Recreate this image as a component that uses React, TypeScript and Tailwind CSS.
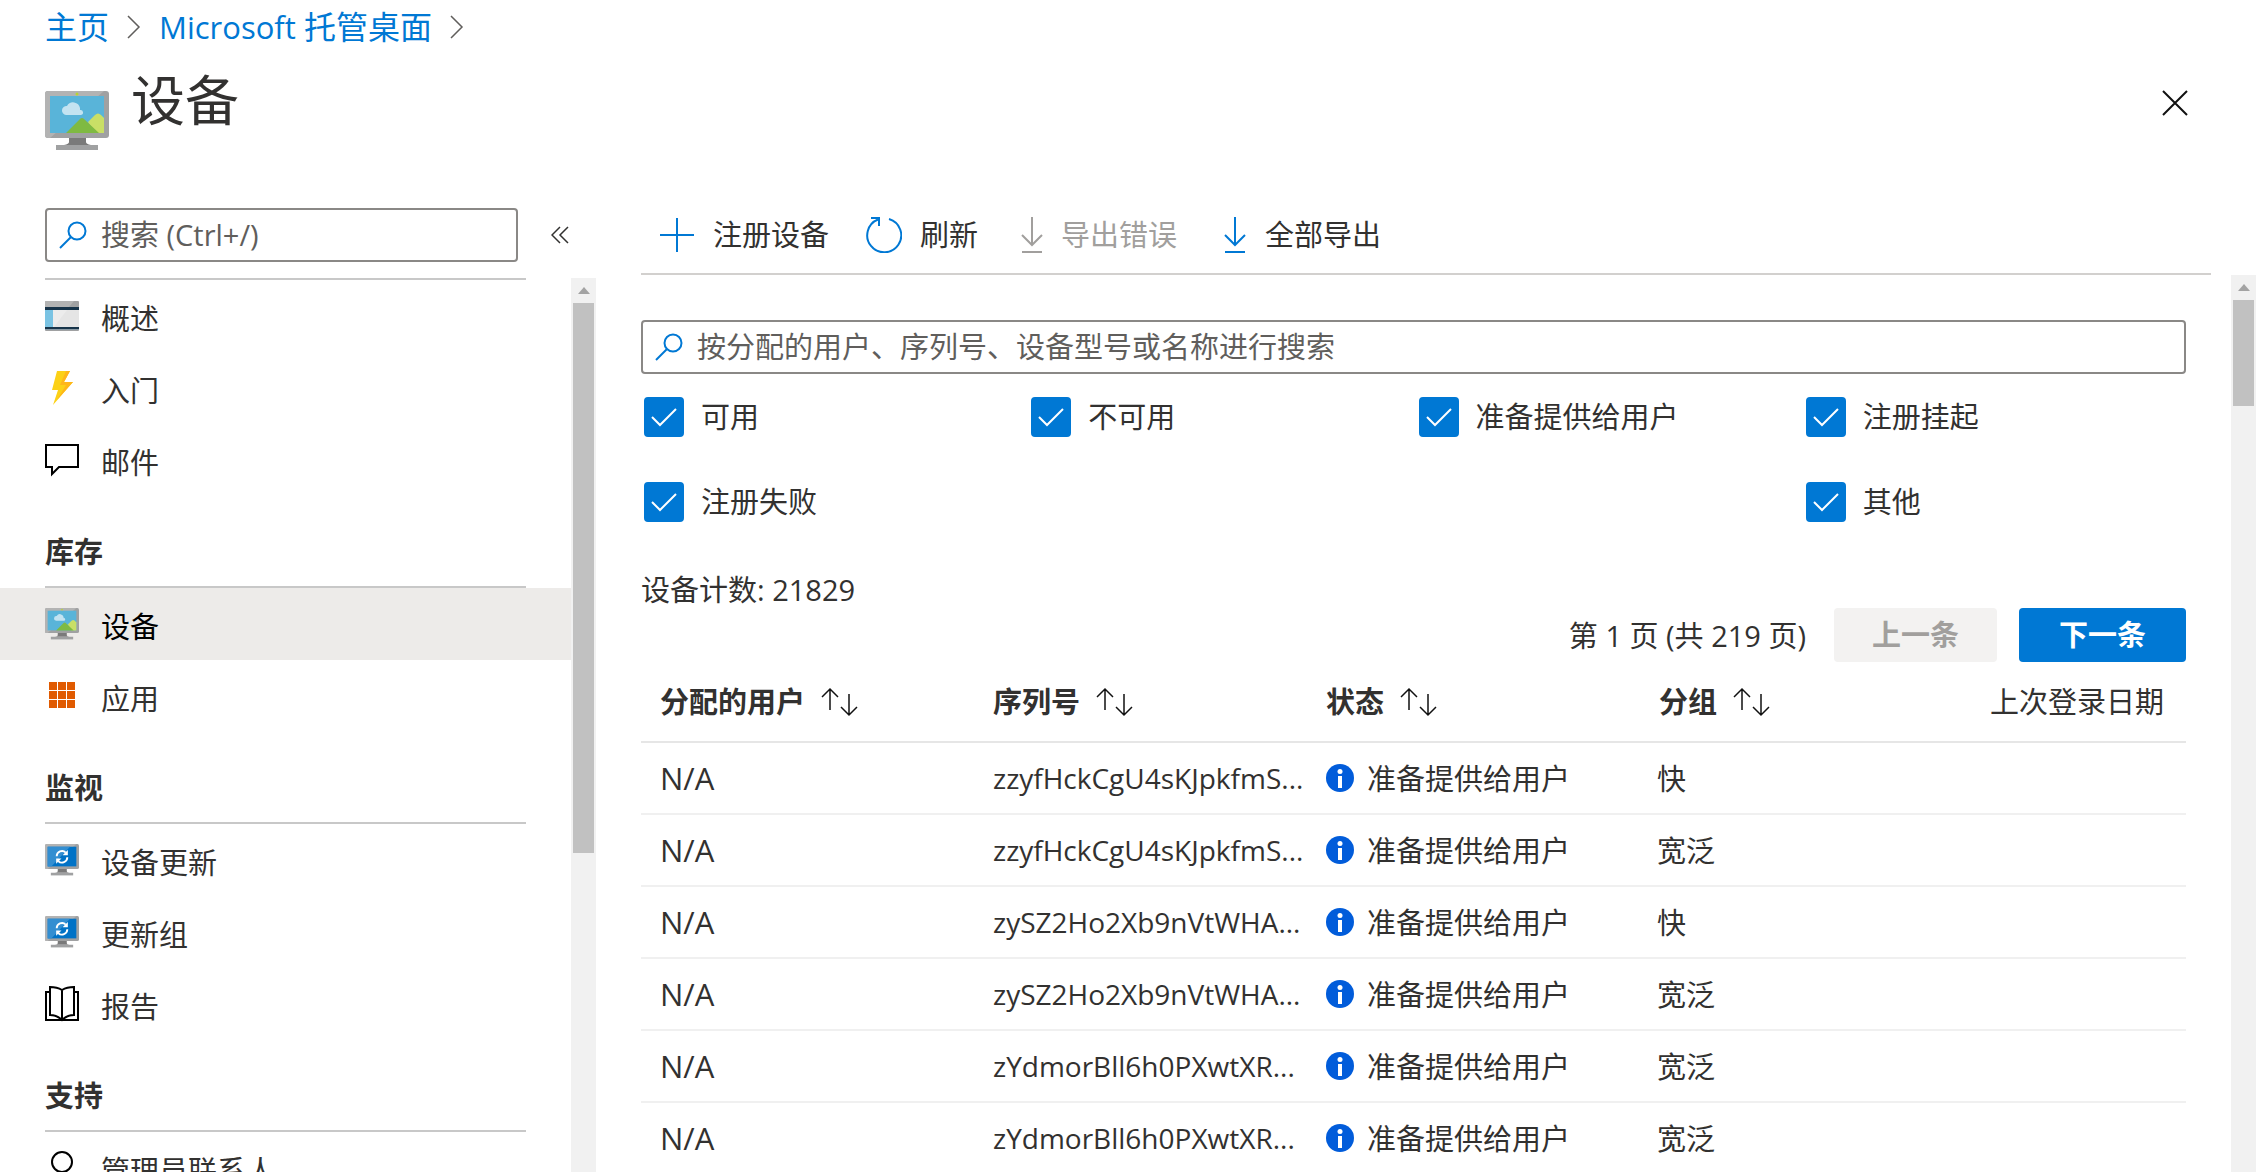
import React, { useState } from 'react';

const MonitorFrame: React.FC<{ children: React.ReactNode; className?: string }> = ({ children, className }) => (
  <svg viewBox="0 0 64 60" className={className} aria-hidden="true">
    <rect x="0" y="0" width="64" height="47" rx="3" fill="#a0a1a2" />
    <path d="M3 0h56L5 47H3q-3 0-3-3V3q0-3 3-3z" fill="#b3b3b3" />
    {children}
    <path d="M24 47h17v4q0 2 5 3H19q5-1 5-3z" fill="#7a7a7a" />
    <rect x="11" y="54" width="42" height="5" fill="#a0a1a2" />
  </svg>
);

const DeviceIcon: React.FC<{ className?: string }> = ({ className }) => (
  <MonitorFrame className={className}>
    <rect x="5" y="5" width="54" height="37" fill="#59b4d9" />
    <circle cx="32" cy="3" r="1.500" fill="#b8d432" />
    <path d="M21 24a4.500 4.500 0 0 1 1-9 7 7 0 0 1 13 2q0 2 0 2a2.500 2.500 0 0 1 1 5z" fill="#c3e3f1" />
    <path d="M43 31l7-7q3-3 6 0l3 3v15H50z" fill="#c9df66" />
    <path d="M21 42l14-14q2-2 4 0l15 14z" fill="#7fba42" />
  </MonitorFrame>
);

const DeviceUpdateIcon: React.FC<{ className?: string }> = ({ className }) => (
  <MonitorFrame className={className}>
    <rect x="5" y="5" width="54" height="37" fill="#0072c6" />
    <path d="M5 5h42L12 42H5z" fill="#338ed1" />
    <g fill="none" stroke="#fff" strokeWidth="3.500">
      <path d="M22 23a10 10 0 0 1 17-7" />
      <path d="M42 25a10 10 0 0 1-17 7" />
    </g>
    <path d="M43 11v10H33zM21 37V27h10z" fill="#fff" />
  </MonitorFrame>
);

const OverviewIcon: React.FC<{ className?: string }> = ({ className }) => (
  <svg viewBox="0 0 34 34" className={className} aria-hidden="true">
    <rect x="0" y="2" width="34" height="30" rx="1" fill="#a0a1a2" />
    <path d="M1 2h28l-5 6H0V3z" fill="#b3b3b3" />
    <rect x="0" y="8" width="34" height="23" fill="#17344a" />
    <rect x="0" y="11" width="34" height="17" fill="#e5e5e5" />
    <path d="M22 11L9 28H8V11z" fill="#ececec" />
    <rect x="0" y="11" width="8" height="17" fill="#7ac3e3" />
    <rect x="0" y="30" width="34" height="1" fill="#8a9aa5" />
  </svg>
);

const BoltIcon: React.FC<{ className?: string }> = ({ className }) => (
  <svg viewBox="0 0 34 34" className={className} aria-hidden="true">
    <path d="M12 0h13l-6 11h9L8 34l5-15H7z" fill="#fcd116" />
    <path d="M21 0h4l-6 11h9L12 29l9-15h-6z" fill="#ffb61a" />
  </svg>
);

const MessageIcon: React.FC<{ className?: string }> = ({ className }) => (
  <svg viewBox="0 0 34 34" className={className} fill="none" stroke="#000" strokeWidth="2" aria-hidden="true">
    <path d="M1 2h32v22H14l-7 7v-7H1z" />
  </svg>
);

const AppsIcon: React.FC<{ className?: string }> = ({ className }) => (
  <svg viewBox="0 0 34 34" className={className} fill="#e05a00" aria-hidden="true">
    {[4, 13, 22].map((x) => [3, 12, 21].map((y) => <rect key={`${x}-${y}`} x={x} y={y} width="8" height="8" />))}
  </svg>
);

const BookIcon: React.FC<{ className?: string }> = ({ className }) => (
  <svg viewBox="0 0 34 36" className={className} fill="none" stroke="#000" strokeWidth="2" aria-hidden="true">
    <path d="M5 6H1v28h32V6h-4" />
    <path d="M17 34V4Q12 1 5 1v28q7 0 12 5 5-5 12-5V1q-7 0-12 3" />
  </svg>
);

const PersonIcon: React.FC<{ className?: string }> = ({ className }) => (
  <svg viewBox="0 0 34 34" className={className} fill="none" stroke="#000" strokeWidth="2" aria-hidden="true">
    <circle cx="17" cy="11" r="10" />
    <path d="M3 34q2-13 14-13t14 13" />
  </svg>
);

const SearchIcon: React.FC<{ className?: string }> = ({ className }) => (
  <svg viewBox="0 0 28 28" className={className} fill="none" stroke="#0078d4" strokeWidth="2" aria-hidden="true">
    <circle cx="18" cy="10" r="8.500" />
    <path d="M12 16L1 27" />
  </svg>
);

const ChevronIcon: React.FC = () => (
  <svg viewBox="0 0 14 24" className="h-6 w-3.5" fill="none" stroke="#605e5c" strokeWidth="1.500" aria-hidden="true">
    <path d="M1 1l11 11L1 23" />
  </svg>
);

const PlusIcon: React.FC = () => (
  <svg viewBox="0 0 34 34" className="size-[34px]" stroke="#0078d4" strokeWidth="2" aria-hidden="true">
    <path d="M17 0v34M0 17h34" />
  </svg>
);

const RefreshIcon: React.FC = () => (
  <svg viewBox="0 0 36 36" className="size-9" fill="none" stroke="#0078d4" strokeWidth="2" aria-hidden="true">
    <path d="M23 2A17 17 0 1 1 12 2.500" />
    <path d="M5 1h8v8" />
  </svg>
);

const DownloadIcon: React.FC = () => (
  <svg viewBox="0 0 22 36" className="h-9 w-[22px]" fill="none" stroke="currentColor" strokeWidth="2" aria-hidden="true">
    <path d="M11 0v28M1 18l10 10 10-10M1 35h20" />
  </svg>
);

const SortIcon: React.FC = () => (
  <svg viewBox="0 0 38 30" className="h-[30px] w-[38px]" fill="none" stroke="#111" strokeWidth="1.500" aria-hidden="true">
    <path d="M9 23V2M1 10l8-8 8 8M28 7v21M20 20l8 8 8-8" />
  </svg>
);

const InfoIcon: React.FC = () => (
  <svg viewBox="0 0 28 28" className="size-7 shrink-0" aria-hidden="true">
    <circle cx="14" cy="14" r="14" fill="#015cda" />
    <circle cx="14" cy="7.500" r="2.500" fill="#fff" />
    <rect x="12" y="12" width="4" height="12" fill="#fff" />
  </svg>
);

interface NavItem {
  label: string;
  icon: React.FC<{ className?: string }>;
}

interface NavSection {
  title?: string;
  items: NavItem[];
}

const sections: NavSection[] = [
  {
    items: [
      { label: '概述', icon: OverviewIcon },
      { label: '入门', icon: BoltIcon },
      { label: '邮件', icon: MessageIcon },
    ],
  },
  {
    title: '库存',
    items: [
      { label: '设备', icon: DeviceIcon },
      { label: '应用', icon: AppsIcon },
    ],
  },
  {
    title: '监视',
    items: [
      { label: '设备更新', icon: DeviceUpdateIcon },
      { label: '更新组', icon: DeviceUpdateIcon },
      { label: '报告', icon: BookIcon },
    ],
  },
  {
    title: '支持',
    items: [{ label: '管理员联系人', icon: PersonIcon }],
  },
];

const filters = [
  { label: '可用', className: '' },
  { label: '不可用', className: '' },
  { label: '准备提供给用户', className: '' },
  { label: '注册挂起', className: '' },
  { label: '注册失败', className: '' },
  { label: '其他', className: 'col-start-4' },
];

const devices = [
  { user: 'N/A', serial: 'zzyfHckCgU4sKJpkfmS...', status: '准备提供给用户', group: '快' },
  { user: 'N/A', serial: 'zzyfHckCgU4sKJpkfmS...', status: '准备提供给用户', group: '宽泛' },
  { user: 'N/A', serial: 'zySZ2Ho2Xb9nVtWHA...', status: '准备提供给用户', group: '快' },
  { user: 'N/A', serial: 'zySZ2Ho2Xb9nVtWHA...', status: '准备提供给用户', group: '宽泛' },
  { user: 'N/A', serial: 'zYdmorBll6h0PXwtXR...', status: '准备提供给用户', group: '宽泛' },
  { user: 'N/A', serial: 'zYdmorBll6h0PXwtXR...', status: '准备提供给用户', group: '宽泛' },
];

const columns = ['分配的用户', '序列号', '状态', '分组'];

const Scrollbar: React.FC<{ thumb: string }> = ({ thumb }) => (
  <div className="flex w-[25px] shrink-0 flex-col items-center bg-[#f1f1f1]" aria-hidden="true">
    <div className="flex h-[25px] items-center">
      <svg viewBox="0 0 12 7" className="h-[7px] w-3" fill="#a3a3a3">
        <path d="M6 0l6 7H0z" />
      </svg>
    </div>
    <div className={`w-[21px] bg-[#c1c1c1] ${thumb}`} />
  </div>
);

const SearchBox: React.FC<{ label: string; className?: string }> = ({ label, className = '' }) => (
  <label className={`flex h-[54px] items-center gap-[14px] rounded border-2 border-[#8a8886] px-3 ${className}`}>
    <SearchIcon className="size-7 shrink-0" />
    <input
      type="text"
      aria-label={label}
      placeholder={label}
      className="min-w-0 flex-1 bg-transparent outline-none placeholder:text-[#605e5c]"
    />
  </label>
);

const Sidebar: React.FC = () => {
  const [active, setActive] = useState('设备');

  return (
    <aside className="flex w-[596px] shrink-0 flex-col">
      <div className="flex items-center gap-[33px] pb-4 pl-[45px]">
        <SearchBox label="搜索 (Ctrl+/)" className="w-[473px]" />
        <button aria-label="折叠菜单">
          <svg viewBox="0 0 18 18" className="size-[18px]" fill="none" stroke="#323130" strokeWidth="1.500">
            <path d="M9 1L1 9l8 8M17 1L9 9l8 8" />
          </svg>
        </button>
      </div>
      <div className="flex min-h-0 flex-1">
        <nav className="flex-1 overflow-hidden">
          {sections.map((section, index) => (
            <div key={index}>
              {section.title ? (
                <h2 className="mx-[45px] flex h-[92px] items-end border-b-2 border-[#c8c8c8] pb-[14px] font-bold">
                  {section.title}
                </h2>
              ) : (
                <div className="mx-[45px] h-0.5 bg-[#c8c8c8]" />
              )}
              {section.items.map(({ label, icon: Icon }) => (
                <a
                  key={label}
                  href="#"
                  onClick={() => setActive(label)}
                  className={`flex h-[72px] items-center gap-[22px] pl-[45px] ${active === label ? 'bg-[#edebe9] text-black' : ''}`}
                >
                  <Icon className="h-9 w-[34px] shrink-0" />
                  <span className="pt-1.5">{label}</span>
                </a>
              ))}
            </div>
          ))}
        </nav>
        <Scrollbar thumb="h-[550px]" />
      </div>
    </aside>
  );
};

const Toolbar: React.FC = () => (
  <div className="mr-[45px] flex h-[67px] items-start border-b-2 border-[#d2d0ce] pl-[19px] pt-[7px]">
    <button className="mr-[37px] flex items-center gap-[19px]">
      <PlusIcon />
      注册设备
    </button>
    <button className="mr-[43px] flex items-center gap-[18px]">
      <RefreshIcon />
      刷新
    </button>
    <button disabled className="mr-[47px] flex items-center gap-[18px] text-[#a19f9d]">
      <DownloadIcon />
      导出错误
    </button>
    <button className="flex items-center gap-[19px]">
      <span className="text-[#0078d4]">
        <DownloadIcon />
      </span>
      全部导出
    </button>
  </div>
);

const FilterBox: React.FC<{ label: string; className: string }> = ({ label, className }) => {
  const [checked, setChecked] = useState(true);

  return (
    <label className={`flex items-center gap-[17px] pl-[3px] ${className}`}>
      <span className="relative flex size-10">
        <input
          type="checkbox"
          checked={checked}
          onChange={(e) => setChecked(e.target.checked)}
          className="size-10 appearance-none rounded border-2 border-[#323130] checked:border-[#0078d4] checked:bg-[#0078d4]"
        />
        {checked && (
          <svg viewBox="0 0 40 40" className="pointer-events-none absolute inset-0" fill="none" stroke="#fff" strokeWidth="2">
            <path d="M8 20l8 8 16-16" />
          </svg>
        )}
      </span>
      {label}
    </label>
  );
};

const DeviceTable: React.FC = () => (
  <table className="w-full table-fixed text-left">
    <thead>
      <tr className="h-20 border-b-2 border-[#e6e6e6]">
        {columns.map((column) => (
          <th key={column} className="w-[333px] pl-[19px] font-bold">
            <button className="flex items-center gap-4">
              {column}
              <SortIcon />
            </button>
          </th>
        ))}
        <th className="whitespace-nowrap pl-[17px] font-normal">上次登录日期</th>
      </tr>
    </thead>
    <tbody>
      {devices.map((device, index) => (
        <tr key={index} className="h-[72px] border-b-2 border-[#f0f0f0]">
          <td className="pl-[19px] text-[31px]">{device.user}</td>
          <td className="whitespace-nowrap pl-[19px] text-[28px]">{device.serial}</td>
          <td className="pl-[19px]">
            <span className="flex items-center gap-[13px] whitespace-nowrap">
              <InfoIcon />
              <span className="pt-0.5">{device.status}</span>
            </span>
          </td>
          <td className="pl-[17px] pt-0.5">{device.group}</td>
          <td />
        </tr>
      ))}
    </tbody>
  </table>
);

export default function App() {
  return (
    <div className="flex h-screen flex-col overflow-hidden bg-white font-['Open_Sans','Noto_Sans_CJK_SC',sans-serif] text-[29px] leading-10 text-[#323130]">
      <header className="h-[208px] shrink-0 pl-[45px]">
        <nav className="flex items-center gap-[18px] pt-[7px] text-[32px] text-[#0078d4]">
          <a href="#">主页</a>
          <ChevronIcon />
          <a href="#">
            <span className="text-[31px]">Microsoft</span> 托管桌面
          </a>
          <ChevronIcon />
        </nav>
        <div className="flex items-center justify-between pr-[68px] pt-[21px]">
          <div className="flex items-start gap-[22px]">
            <DeviceIcon className="mt-[23px] h-[60px] w-16" />
            <h1 className="text-[54px] leading-[64px]">设备</h1>
          </div>
          <button aria-label="关闭" className="mb-[14px]">
            <svg viewBox="0 0 26 26" className="size-[26px]" stroke="#111" strokeWidth="2">
              <path d="M1 1l24 24M25 1L1 25" />
            </svg>
          </button>
        </div>
      </header>
      <div className="flex min-h-0 flex-1">
        <Sidebar />
        <main className="flex min-w-0 flex-1 flex-col pl-[45px]">
          <Toolbar />
          <div className="flex min-h-0 flex-1">
            <div className="min-w-0 flex-1 overflow-hidden pr-[45px] pt-[45px]">
              <SearchBox label="按分配的用户、序列号、设备型号或名称进行搜索" />
              <div className="grid grid-cols-4 gap-x-1 gap-y-[45px] pt-[23px]">
                {filters.map((filter) => (
                  <FilterBox key={filter.label} {...filter} />
                ))}
              </div>
              <p className="pt-[50px] leading-9">设备计数: 21829</p>
              <div className="flex items-center justify-end">
                <span className="mr-7 pt-0.5">第 1 页 (共 219 页)</span>
                <button disabled className="mr-[22px] h-[54px] rounded bg-[#f3f2f1] px-[38px] font-bold text-[#a19f9d]">
                  上一条
                </button>
                <button className="h-[54px] rounded bg-[#0078d4] px-10 font-bold text-white">下一条</button>
              </div>
              <DeviceTable />
            </div>
            <Scrollbar thumb="h-[106px]" />
          </div>
        </main>
      </div>
    </div>
  );
}
